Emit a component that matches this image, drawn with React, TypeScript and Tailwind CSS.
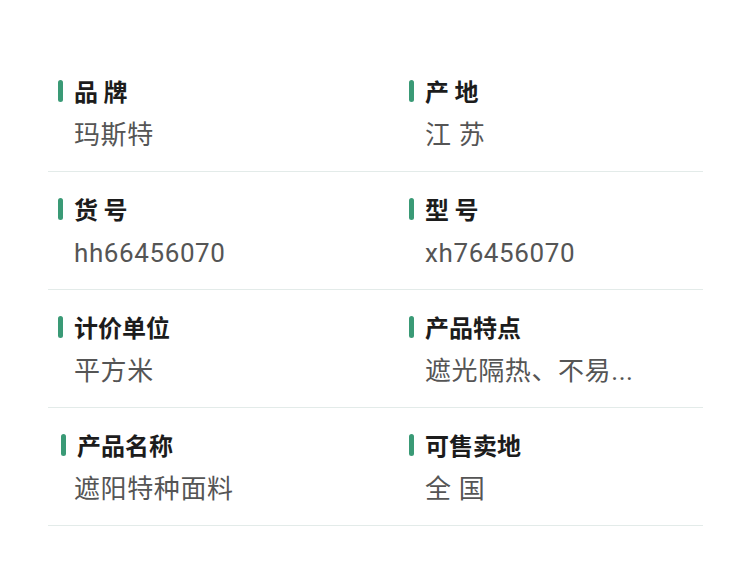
const rows: { label: string; value: string; shift?: boolean }[][] = [
  [
    { label: "品 牌", value: "玛斯特" },
    { label: "产 地", value: "江 苏" },
  ],
  [
    { label: "货 号", value: "hh66456070" },
    { label: "型 号", value: "xh76456070" },
  ],
  [
    { label: "计价单位", value: "平方米" },
    { label: "产品特点", value: "遮光隔热、不易..." },
  ],
  [
    { label: "产品名称", value: "遮阳特种面料", shift: true },
    { label: "可售卖地", value: "全 国" },
  ],
];

function Cell({ label, value, shift }: { label: string; value: string; shift?: boolean }) {
  return (
    <div className="pt-[21px] pb-[18px] pl-[10px]">
      <div className={`flex items-center h-[32px] ${shift ? "pl-[3px]" : ""}`}>
        <span className="w-[5px] h-[22px] rounded-full bg-[#3a9a76] mr-[11px]" />
        <span className="text-[24px] font-bold text-[#1c1c1c] leading-[32px]">{label}</span>
      </div>
      <div
        className="mt-[10px] pl-[16px] text-[26px] leading-[36px] tracking-[0.6px] text-[#555555] whitespace-nowrap"
        style={{ fontFamily: 'Roboto, "Noto Sans CJK SC", sans-serif' }}
      >
        {value}
      </div>
    </div>
  );
}

export default function App() {
  return (
    <div
      className="w-[750px] h-[570px] bg-white pt-[54px] px-[48px]"
      style={{ fontFamily: '"Noto Sans CJK SC", "Noto Sans", sans-serif' }}
    >
      <div className="w-[655px]">
        {rows.map((row, i) => (
          <div key={i} className="grid grid-cols-[351px_1fr] border-b border-[#e3ebe9]">
            {row.map((c) => (
              <Cell key={c.label} {...c} />
            ))}
          </div>
        ))}
      </div>
    </div>
  );
}
